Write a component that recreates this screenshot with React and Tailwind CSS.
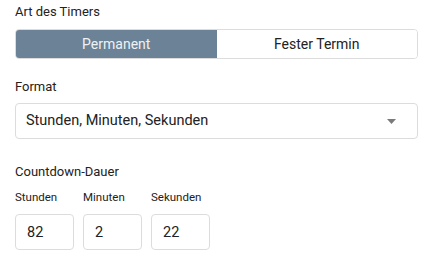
import React, { useState } from 'react';

function FieldLabel({ children, className = '' }) {
  return <div className={`text-[13px] leading-[16px] text-[#222] ${className}`}>{children}</div>;
}

export default function App() {
  const [mode, setMode] = useState('permanent');
  const [time, setTime] = useState({ h: '82', m: '2', s: '22' });

  const units = [
    { key: 'h', label: 'Stunden' },
    { key: 'm', label: 'Minuten' },
    { key: 's', label: 'Sekunden' },
  ];

  return (
    <div className="w-[441px] h-[264px] bg-white px-[15px] pt-[4px] font-['Roboto',sans-serif] text-[#222]">
      <FieldLabel>Art des Timers</FieldLabel>

      {/* segmented switch */}
      <div className="mt-[9px] flex h-[30px] w-[403px] rounded-[4px] border border-[#dcdcdc] overflow-hidden text-[14px]">
        <button
          onClick={() => setMode('permanent')}
          className={`flex-1 ${mode === 'permanent' ? 'bg-[#6c8296] text-[#eef2f5]' : 'bg-white text-[#222]'}`}
        >
          Permanent
        </button>
        <button
          onClick={() => setMode('fixed')}
          className={`flex-1 ${mode === 'fixed' ? 'bg-[#6c8296] text-[#eef2f5]' : 'bg-white text-[#222]'}`}
        >
          Fester Termin
        </button>
      </div>

      <FieldLabel className="mt-[20px]">Format</FieldLabel>

      {/* select */}
      <div className="mt-[8px] flex h-[36px] w-[403px] items-center justify-between rounded-[4px] border border-[#dcdcdc] pl-[10px] pr-[21px] text-[14.5px]">
        <span>Stunden, Minuten, Sekunden</span>
        <svg width="9" height="5" viewBox="0 0 9 5">
          <path d="M0 0 L9 0 L4.5 5 Z" fill="#7a7a7a" />
        </svg>
      </div>

      <FieldLabel className="mt-[25px]">Countdown-Dauer</FieldLabel>

      <div className="mt-[10px] flex gap-[9px]">
        {units.map((u) => (
          <div key={u.key} className="w-[59px]">
            <div className="text-[11.5px] leading-[14px] text-[#222]">{u.label}</div>
            <input
              value={time[u.key]}
              onChange={(e) => setTime({ ...time, [u.key]: e.target.value })}
              className="mt-[10px] h-[36px] w-[59px] rounded-[4px] border border-[#dcdcdc] px-[11px] text-[14.5px] text-[#222] outline-none"
            />
          </div>
        ))}
      </div>
    </div>
  );
}
